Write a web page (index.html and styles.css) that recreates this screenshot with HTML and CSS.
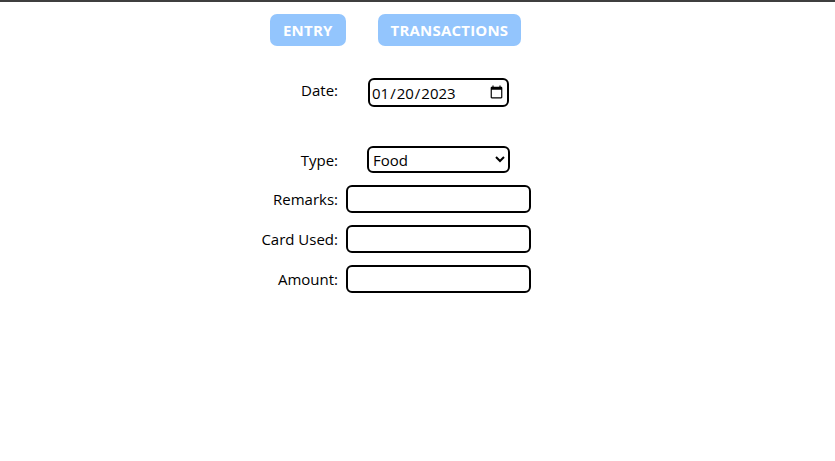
FILE: index.html
```html
<!DOCTYPE html>
<html>
<head>
<meta charset="utf-8">
<link rel="stylesheet" href="styles.css">
</head>
<body>
<div class="topline"></div>
<div class="page">
  <nav class="nav">
    <button class="navbtn">ENTRY</button>
    <button class="navbtn">TRANSACTIONS</button>
  </nav>
  <form class="form">
    <label class="lbl date-lbl">Date:</label>
    <div class="cell date-cell"><input class="date" type="date" value="2023-01-20"></div>
    <label class="lbl">Type:</label>
    <div class="cell"><select class="sel"><option>Food</option></select></div>
    <label class="lbl">Remarks:</label>
    <div class="cell"><input class="txt" type="text"></div>
    <label class="lbl">Card Used:</label>
    <div class="cell"><input class="txt" type="text"></div>
    <label class="lbl">Amount:</label>
    <div class="cell"><input class="txt" type="text"></div>
  </form>
</div>
</body>
</html>
```
FILE: styles.css
```css
html, body { margin: 0; padding: 0; background: #fff; }
body { font-family: "Open Sans", "Noto Sans", sans-serif; color: #000; }
.topline { height: 2px; background: #3f3f3f; }
.page { padding-top: 12px; }
.nav { display: flex; gap: 32px; margin-left: 270px; }
.navbtn {
  height: 32px; padding: 0 13px; border: none; border-radius: 7px;
  background: #93c5fd; color: #fff; font-family: "Open Sans", sans-serif;
  font-weight: 700; font-size: 15px; letter-spacing: 0.2px; cursor: pointer;
}
.form {
  display: grid; grid-template-columns: 88px 185px; column-gap: 8px; row-gap: 12px;
  margin-left: 250px; margin-top: 32px; align-items: center;
}
.lbl { text-align: right; font-size: 15px; line-height: 20px; }
.date-lbl { align-self: start; margin-top: 2px; }
.cell { display: flex; justify-content: center; }
.date-cell { margin-bottom: 27px; }
.date {
  box-sizing: border-box; width: 141px; height: 29px; border: 2px solid #000; border-radius: 6px;
  font-family: "Open Sans", sans-serif; font-size: 15px; padding: 0 1px; background: #fff;
}
.sel {
  box-sizing: border-box; width: 143px; height: 27px; border: 2px solid #000; border-radius: 6px;
  font-family: "Open Sans", sans-serif; font-size: 15px; padding: 0; background: #fff; color: #000;
}
.txt {
  box-sizing: border-box; width: 185px; height: 28px; border: 2px solid #000; border-radius: 6px;
  font-family: "Open Sans", sans-serif; font-size: 15px; padding: 0 4px; background: #fff;
}
```
